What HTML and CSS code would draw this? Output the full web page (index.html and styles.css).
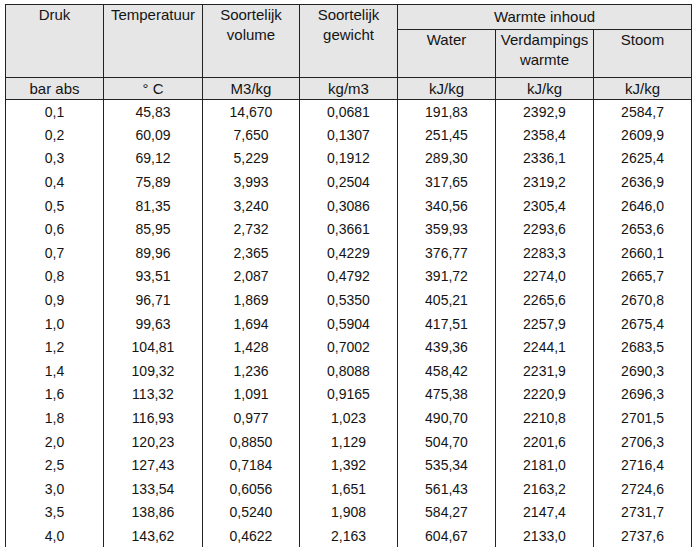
FILE: index.html
```html
<!DOCTYPE html>
<html lang="nl">
<head>
<meta charset="utf-8">
<title>Stoomtabel</title>
<link rel="stylesheet" href="styles.css">
</head>
<body>
<table class="steam">
  <colgroup>
    <col class="c1"><col class="c2"><col class="c3"><col class="c4"><col class="c5"><col class="c6"><col class="c7">
  </colgroup>
  <thead>
    <tr class="h1">
      <th rowspan="2" class="top">Druk</th>
      <th rowspan="2" class="top">Temperatuur</th>
      <th rowspan="2" class="top">Soortelijk<br>volume</th>
      <th rowspan="2" class="top">Soortelijk<br>gewicht</th>
      <th colspan="3" class="group">Warmte inhoud</th>
    </tr>
    <tr class="h2">
      <th class="top">Water</th>
      <th class="top">Verdampings<br>warmte</th>
      <th class="top">Stoom</th>
    </tr>
    <tr class="units">
      <th>bar abs</th>
      <th>° C</th>
      <th>M3/kg</th>
      <th>kg/m3</th>
      <th>kJ/kg</th>
      <th>kJ/kg</th>
      <th>kJ/kg</th>
    </tr>
  </thead>
  <tbody>
    <tr><td>0,1</td><td>45,83</td><td>14,670</td><td>0,0681</td><td>191,83</td><td>2392,9</td><td>2584,7</td></tr>
    <tr><td>0,2</td><td>60,09</td><td>7,650</td><td>0,1307</td><td>251,45</td><td>2358,4</td><td>2609,9</td></tr>
    <tr><td>0,3</td><td>69,12</td><td>5,229</td><td>0,1912</td><td>289,30</td><td>2336,1</td><td>2625,4</td></tr>
    <tr><td>0,4</td><td>75,89</td><td>3,993</td><td>0,2504</td><td>317,65</td><td>2319,2</td><td>2636,9</td></tr>
    <tr><td>0,5</td><td>81,35</td><td>3,240</td><td>0,3086</td><td>340,56</td><td>2305,4</td><td>2646,0</td></tr>
    <tr><td>0,6</td><td>85,95</td><td>2,732</td><td>0,3661</td><td>359,93</td><td>2293,6</td><td>2653,6</td></tr>
    <tr><td>0,7</td><td>89,96</td><td>2,365</td><td>0,4229</td><td>376,77</td><td>2283,3</td><td>2660,1</td></tr>
    <tr><td>0,8</td><td>93,51</td><td>2,087</td><td>0,4792</td><td>391,72</td><td>2274,0</td><td>2665,7</td></tr>
    <tr><td>0,9</td><td>96,71</td><td>1,869</td><td>0,5350</td><td>405,21</td><td>2265,6</td><td>2670,8</td></tr>
    <tr><td>1,0</td><td>99,63</td><td>1,694</td><td>0,5904</td><td>417,51</td><td>2257,9</td><td>2675,4</td></tr>
    <tr><td>1,2</td><td>104,81</td><td>1,428</td><td>0,7002</td><td>439,36</td><td>2244,1</td><td>2683,5</td></tr>
    <tr><td>1,4</td><td>109,32</td><td>1,236</td><td>0,8088</td><td>458,42</td><td>2231,9</td><td>2690,3</td></tr>
    <tr><td>1,6</td><td>113,32</td><td>1,091</td><td>0,9165</td><td>475,38</td><td>2220,9</td><td>2696,3</td></tr>
    <tr><td>1,8</td><td>116,93</td><td>0,977</td><td>1,023</td><td>490,70</td><td>2210,8</td><td>2701,5</td></tr>
    <tr><td>2,0</td><td>120,23</td><td>0,8850</td><td>1,129</td><td>504,70</td><td>2201,6</td><td>2706,3</td></tr>
    <tr><td>2,5</td><td>127,43</td><td>0,7184</td><td>1,392</td><td>535,34</td><td>2181,0</td><td>2716,4</td></tr>
    <tr><td>3,0</td><td>133,54</td><td>0,6056</td><td>1,651</td><td>561,43</td><td>2163,2</td><td>2724,6</td></tr>
    <tr><td>3,5</td><td>138,86</td><td>0,5240</td><td>1,908</td><td>584,27</td><td>2147,4</td><td>2731,7</td></tr>
    <tr><td>4,0</td><td>143,62</td><td>0,4622</td><td>2,163</td><td>604,67</td><td>2133,0</td><td>2737,6</td></tr>
  </tbody>
</table>
</body>
</html>
```
FILE: styles.css
```css
html, body {
  margin: 0;
  padding: 0;
  background: #ffffff;
}

body {
  padding: 4px 0 0 5px;
  font-family: "Liberation Sans", Arial, sans-serif;
  font-size: 14px;
  color: #141414;
  overflow: hidden;
}

.steam {
  border-collapse: collapse;
  table-layout: fixed;
  width: 686px;
}

.c1 { width: 98px; }
.c2 { width: 99px; }
.c3 { width: 97px; }
.c4 { width: 98px; }
.c5 { width: 98px; }
.c6 { width: 98px; }
.c7 { width: 98px; }

.steam th,
.steam td {
  border-left: 1px solid #222222;
  border-right: 1px solid #222222;
  padding: 0;
  text-align: center;
  font-weight: normal;
  line-height: 20px;
}

.steam th {
  background: #e6e6e6;
  border-top: 1px solid #222222;
  border-bottom: 1px solid #222222;
  font-size: 15px;
}

.steam th.top {
  vertical-align: top;
}

.h1 { height: 25px; }
.h1 th.group { vertical-align: middle; }
.h2 { height: 48px; }
.units { height: 22px; }
.units th { vertical-align: middle; }

.steam tbody tr { height: 23.6px; }
.steam td { vertical-align: middle; }
```
